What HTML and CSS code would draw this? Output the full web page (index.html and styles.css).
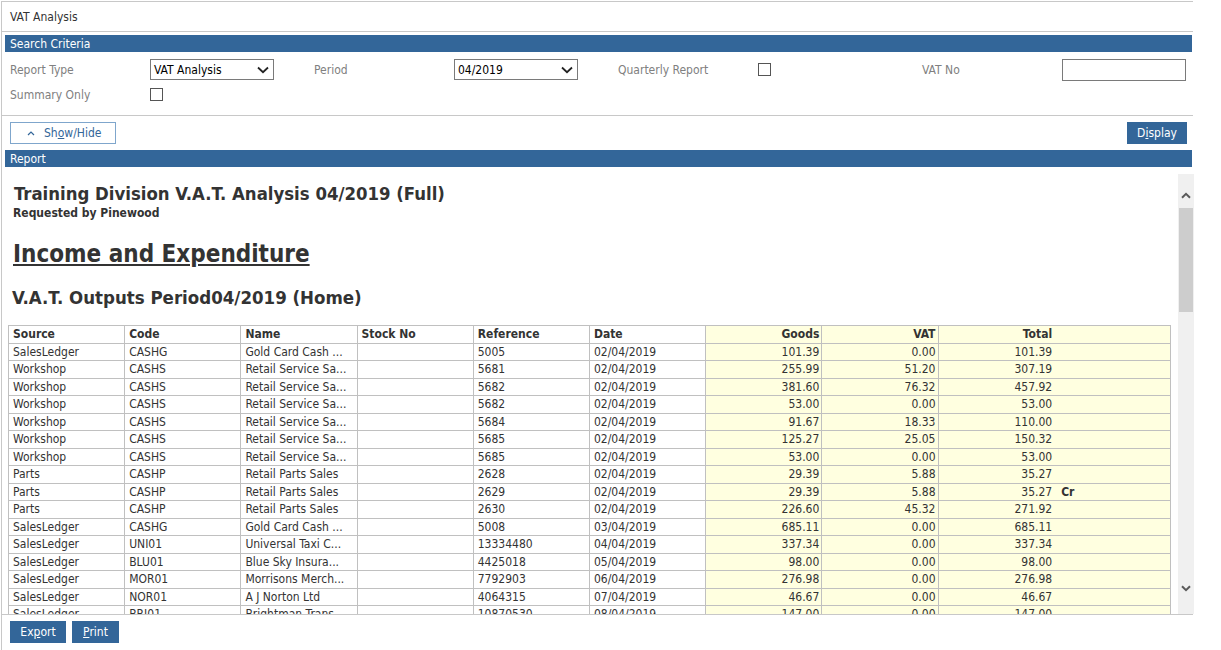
FILE: index.html
```html
<!DOCTYPE html>
<html>
<head>
<meta charset="utf-8">
<title>VAT Analysis</title>
<link rel="stylesheet" href="styles.css">
</head>
<body>
<div class="page">
  <div class="title-row">VAT Analysis</div>

  <div class="section-bar">Search Criteria</div>
  <div class="criteria">
    <div class="grid">
      <div class="label">Report Type</div>
      <div class="select"><span>VAT Analysis</span><svg width="12" height="8" viewBox="0 0 12 8"><path d="M1 1.5 L6 6.2 L11 1.5" fill="none" stroke="#222" stroke-width="1.8"/></svg></div>
      <div></div>
      <div class="label">Period</div>
      <div class="select"><span>04/2019</span><svg width="12" height="8" viewBox="0 0 12 8"><path d="M1 1.5 L6 6.2 L11 1.5" fill="none" stroke="#222" stroke-width="1.8"/></svg></div>
      <div></div>
      <div class="label">Quarterly Report</div>
      <div class="cbx-cell"><span class="checkbox"></span></div>
      <div></div>
      <div class="label">VAT No</div>
      <div class="textbox"></div>
      <div></div>

      <div class="label">Summary Only</div>
      <div class="cbx-cell"><span class="checkbox"></span></div>
    </div>
  </div>

  <div class="toolbar">
    <button class="btn-outline"><svg width="8" height="6" viewBox="0 0 8 6"><path d="M1 5 L4 2 L7 5" fill="none" stroke="#336699" stroke-width="1.2"/></svg><span>Sh<u>o</u>w/Hide</span></button>
    <button class="btn">D<u>i</u>splay</button>
  </div>

  <div class="section-bar report-bar">Report</div>
  <div class="report-view">
    <div class="report-content">
      <h1 class="rpt-title">Training Division V.A.T. Analysis 04/2019 (Full)</h1>
      <div class="rpt-sub">Requested by Pinewood</div>
      <h2 class="rpt-h2">Income and Expenditure</h2>
      <h3 class="rpt-h3">V.A.T. Outputs Period04/2019 (Home)</h3>
      <table class="grid-table">
        <colgroup>
          <col><col><col><col><col><col><col><col><col><col>
        </colgroup>
        <thead>
          <tr>
            <th>Source</th><th>Code</th><th>Name</th><th>Stock No</th><th>Reference</th><th>Date</th>
            <th class="num y">Goods</th><th class="num y">VAT</th><th class="num y tot">Total</th><th class="y cr"></th>
          </tr>
        </thead>
        <tbody>
          <tr><td>SalesLedger</td><td>CASHG</td><td>Gold Card Cash ...</td><td></td><td>5005</td><td>02/04/2019</td><td class="num y">101.39</td><td class="num y">0.00</td><td class="num y tot">101.39</td><td class="y cr"></td></tr>
          <tr><td>Workshop</td><td>CASHS</td><td>Retail Service Sa...</td><td></td><td>5681</td><td>02/04/2019</td><td class="num y">255.99</td><td class="num y">51.20</td><td class="num y tot">307.19</td><td class="y cr"></td></tr>
          <tr><td>Workshop</td><td>CASHS</td><td>Retail Service Sa...</td><td></td><td>5682</td><td>02/04/2019</td><td class="num y">381.60</td><td class="num y">76.32</td><td class="num y tot">457.92</td><td class="y cr"></td></tr>
          <tr><td>Workshop</td><td>CASHS</td><td>Retail Service Sa...</td><td></td><td>5682</td><td>02/04/2019</td><td class="num y">53.00</td><td class="num y">0.00</td><td class="num y tot">53.00</td><td class="y cr"></td></tr>
          <tr><td>Workshop</td><td>CASHS</td><td>Retail Service Sa...</td><td></td><td>5684</td><td>02/04/2019</td><td class="num y">91.67</td><td class="num y">18.33</td><td class="num y tot">110.00</td><td class="y cr"></td></tr>
          <tr><td>Workshop</td><td>CASHS</td><td>Retail Service Sa...</td><td></td><td>5685</td><td>02/04/2019</td><td class="num y">125.27</td><td class="num y">25.05</td><td class="num y tot">150.32</td><td class="y cr"></td></tr>
          <tr><td>Workshop</td><td>CASHS</td><td>Retail Service Sa...</td><td></td><td>5685</td><td>02/04/2019</td><td class="num y">53.00</td><td class="num y">0.00</td><td class="num y tot">53.00</td><td class="y cr"></td></tr>
          <tr><td>Parts</td><td>CASHP</td><td>Retail Parts Sales</td><td></td><td>2628</td><td>02/04/2019</td><td class="num y">29.39</td><td class="num y">5.88</td><td class="num y tot">35.27</td><td class="y cr"></td></tr>
          <tr><td>Parts</td><td>CASHP</td><td>Retail Parts Sales</td><td></td><td>2629</td><td>02/04/2019</td><td class="num y">29.39</td><td class="num y">5.88</td><td class="num y tot">35.27</td><td class="y cr">Cr</td></tr>
          <tr><td>Parts</td><td>CASHP</td><td>Retail Parts Sales</td><td></td><td>2630</td><td>02/04/2019</td><td class="num y">226.60</td><td class="num y">45.32</td><td class="num y tot">271.92</td><td class="y cr"></td></tr>
          <tr><td>SalesLedger</td><td>CASHG</td><td>Gold Card Cash ...</td><td></td><td>5008</td><td>03/04/2019</td><td class="num y">685.11</td><td class="num y">0.00</td><td class="num y tot">685.11</td><td class="y cr"></td></tr>
          <tr><td>SalesLedger</td><td>UNI01</td><td>Universal Taxi C...</td><td></td><td>13334480</td><td>04/04/2019</td><td class="num y">337.34</td><td class="num y">0.00</td><td class="num y tot">337.34</td><td class="y cr"></td></tr>
          <tr><td>SalesLedger</td><td>BLU01</td><td>Blue Sky Insura...</td><td></td><td>4425018</td><td>05/04/2019</td><td class="num y">98.00</td><td class="num y">0.00</td><td class="num y tot">98.00</td><td class="y cr"></td></tr>
          <tr><td>SalesLedger</td><td>MOR01</td><td>Morrisons Merch...</td><td></td><td>7792903</td><td>06/04/2019</td><td class="num y">276.98</td><td class="num y">0.00</td><td class="num y tot">276.98</td><td class="y cr"></td></tr>
          <tr><td>SalesLedger</td><td>NOR01</td><td>A J Norton Ltd</td><td></td><td>4064315</td><td>07/04/2019</td><td class="num y">46.67</td><td class="num y">0.00</td><td class="num y tot">46.67</td><td class="y cr"></td></tr>
          <tr><td>SalesLedger</td><td>BRI01</td><td>Brightman Trans...</td><td></td><td>10870530</td><td>08/04/2019</td><td class="num y">147.00</td><td class="num y">0.00</td><td class="num y tot">147.00</td><td class="y cr"></td></tr>
        </tbody>
      </table>
    </div>
    <div class="scrollbar">
      <div class="sb-arrow up"><svg width="10" height="7" viewBox="0 0 10 7"><path d="M1 5.8 L5 1.8 L9 5.8" fill="none" stroke="#5a5a5a" stroke-width="2"/></svg></div>
      <div class="sb-thumb"></div>
      <div class="sb-track"></div>
      <div class="sb-arrow down"><svg width="10" height="7" viewBox="0 0 10 7"><path d="M1 1.2 L5 5.2 L9 1.2" fill="none" stroke="#5a5a5a" stroke-width="2"/></svg></div>
    </div>
  </div>

  <div class="footer">
    <button class="btn btn-export">Ex<u>p</u>ort</button>
    <button class="btn btn-print"><u>P</u>rint</button>
  </div>
</div>
</body>
</html>
```
FILE: styles.css
```css
* { box-sizing: border-box; }
html, body { margin: 0; padding: 0; background: #fff; }
body {
  font-family: "DejaVu Sans Condensed", "Liberation Sans", sans-serif;
  font-size: 12px;
  color: #333;
  padding: 1px 0 0 1px;
}
.page {
  width: 1192px;
  height: 649px;
  border-left: 1px solid #c8c8c8;
  border-top: 1px solid #c8c8c8;
}
.title-row {
  height: 30px;
  line-height: 30px;
  padding-left: 8px;
  border-bottom: 1px solid #c8c8c8;
  color: #333;
}
.section-bar {
  margin: 3px 1px 0 3px;
  height: 17px;
  line-height: 18px;
  background: #336699;
  color: #fff;
  padding-left: 5px;
}
.section-bar.report-bar { margin-top: 0; line-height: 19px; }
.criteria {
  padding: 5px 0 8px 8px;
  border-bottom: 1px solid #c8c8c8;
}
.grid {
  display: grid;
  grid-template-columns: repeat(4, 140px 124px 40px);
  grid-auto-rows: 25px;
  align-items: center;
}
.label { color: #808080; padding-top: 1px; }
.select {
  height: 21px;
  border: 1px solid #7a7a7a;
  display: flex;
  align-items: center;
  justify-content: space-between;
  padding: 0 4px 0 3px;
  color: #000;
}
.select svg { display: block; }
.textbox {
  height: 22px;
  border: 1px solid #7a7a7a;
  width: 124px;
}
.cbx-cell { display: flex; align-items: center; }
.checkbox {
  display: block;
  width: 13px;
  height: 13px;
  border: 1px solid #555;
  background: #fff;
}
.toolbar {
  display: flex;
  justify-content: space-between;
  align-items: center;
  padding: 6px 6px 6px 8px;
}
button {
  font-family: inherit;
  font-size: 12px;
  margin: 0;
  cursor: pointer;
}
.btn-outline {
  width: 106px;
  height: 22px;
  background: #fff;
  border: 1px solid #7fa6cc;
  color: #336699;
  display: flex;
  align-items: center;
  padding: 0 0 0 16px;
  gap: 9px;
}
.btn-outline svg { display: block; }
.btn {
  height: 22px;
  background: #336699;
  color: #fff;
  border: none;
  padding: 0;
}
.toolbar .btn { width: 60px; }
.report-view {
  margin-top: 7px;
  height: 441px;
  border-bottom: 1px solid #c8c8c8;
  display: flex;
}
.report-content {
  flex: 1;
  overflow: hidden;
  padding: 9px 0 0 6px;
}
.rpt-title {
  margin: 0 0 0 6px;
  font-size: 18.4px;
  line-height: 22px;
  font-weight: bold;
  color: #333;
}
.rpt-sub {
  margin: 1px 0 0 5px;
  font-weight: bold;
  line-height: 15px;
  color: #333;
}
.rpt-h2 {
  margin: 18px 0 0 5px;
  font-size: 24px;
  line-height: 30px;
  font-weight: bold;
  text-decoration: underline;
  color: #333;
}
.rpt-h3 {
  margin: 18px 0 0 4px;
  font-size: 18.5px;
  line-height: 22px;
  font-weight: bold;
  color: #333;
}
.grid-table {
  margin-top: 16px;
  width: 1163px;
  border-collapse: collapse;
  table-layout: fixed;
}
.grid-table col { width: 10%; }
.grid-table th, .grid-table td {
  border: 1px solid #c0c0c0;
  padding: 1px 2px 0 4px;
  line-height: 15.5px;
  height: 17.5px;
  white-space: nowrap;
  overflow: hidden;
  text-align: left;
  color: #333;
}
.grid-table th { font-weight: bold; }
.grid-table .num { text-align: right; }
.grid-table .y { background: #ffffe0; }
.grid-table .tot { border-right: none; }
.grid-table .cr { border-left: none; font-weight: bold; padding-left: 7px; }
.scrollbar {
  width: 16px;
  margin-right: -1px;
  background: #f0f0f0;
  display: flex;
  flex-direction: column;
}
.sb-arrow {
  display: flex;
  justify-content: center;
}
.sb-arrow svg { display: block; }
.sb-arrow.up { height: 34px; padding-top: 18px; }
.sb-arrow.down { height: 44px; padding-top: 15px; }
.sb-thumb {
  height: 104px;
  margin: 0 1px;
  background: #cdcdcd;
}
.sb-track { flex: 1; }
.footer {
  display: flex;
  gap: 6px;
  padding: 6px 0 0 8px;
}
.btn-export { width: 56px; }
.btn-print { width: 47px; }
u { text-decoration: underline; }
```
